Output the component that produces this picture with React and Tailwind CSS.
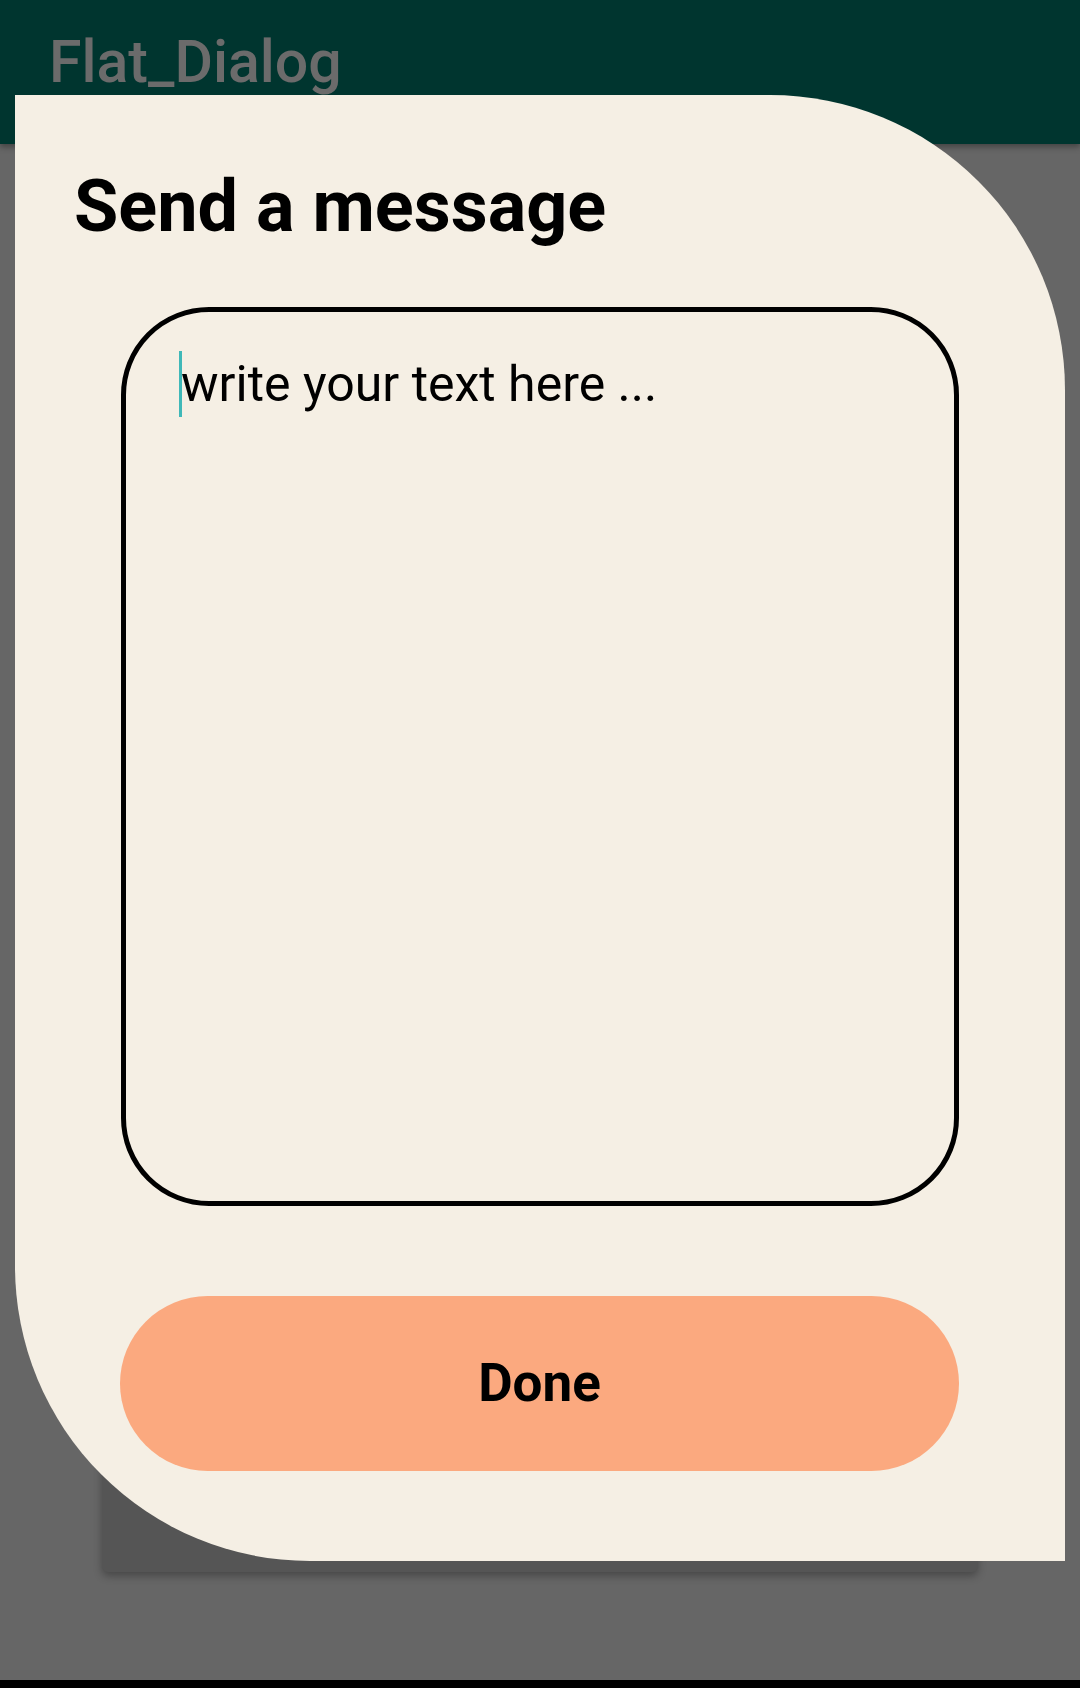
export default function App() {
  return (
    <div className="relative w-[1080px] h-[1688px] overflow-hidden bg-[#666666] font-['Roboto',sans-serif]">
      {/* app bar */}
      <div className="relative z-10 h-[144px] bg-[#00352f] shadow-[0_3px_6px_rgba(0,0,0,0.35)] pl-[49px] pt-[27px]">
        <h1 className="text-[59px] leading-[70px] font-medium text-[#6b6b6b]">Flat_Dialog</h1>
      </div>

      {/* window behind the custom dialog */}
      <div className="absolute left-[102px] top-[220px] w-[876px] h-[1352px] rounded-[6px] bg-[#555555] shadow-[0_4px_8px_rgba(0,0,0,0.3)]" />

      {/* dialog */}
      <Dialog />

      {/* nav bar strip */}
      <div className="absolute left-0 bottom-0 w-full h-[8px] bg-black" />
    </div>
  );
}

function Dialog() {
  return (
    <div className="absolute z-20 left-[15px] top-[95px] w-[1050px] h-[1466px] bg-[#f5efe4] rounded-tr-[295px] rounded-bl-[295px] flex flex-col">
      <h2 className="pl-[59px] pt-[70px] text-[72px] leading-[84px] font-bold text-black">Send a message</h2>

      <div className="mt-[58px] ml-[106px] w-[838px] h-[899px] border-[5px] border-black rounded-[88px] pl-[53px] pt-[39px]">
        <div className="flex items-center text-[50px] leading-[59px] text-black">
          <span className="w-[3px] h-[66px] bg-[#3fb8b8] -mr-[1px] shrink-0" />
          <span>write your text here ...</span>
        </div>
      </div>

      <button className="mt-[90px] ml-[105px] w-[839px] h-[175px] rounded-full bg-[#fba97f] text-[53px] font-bold text-black">
        Done
      </button>
    </div>
  );
}
